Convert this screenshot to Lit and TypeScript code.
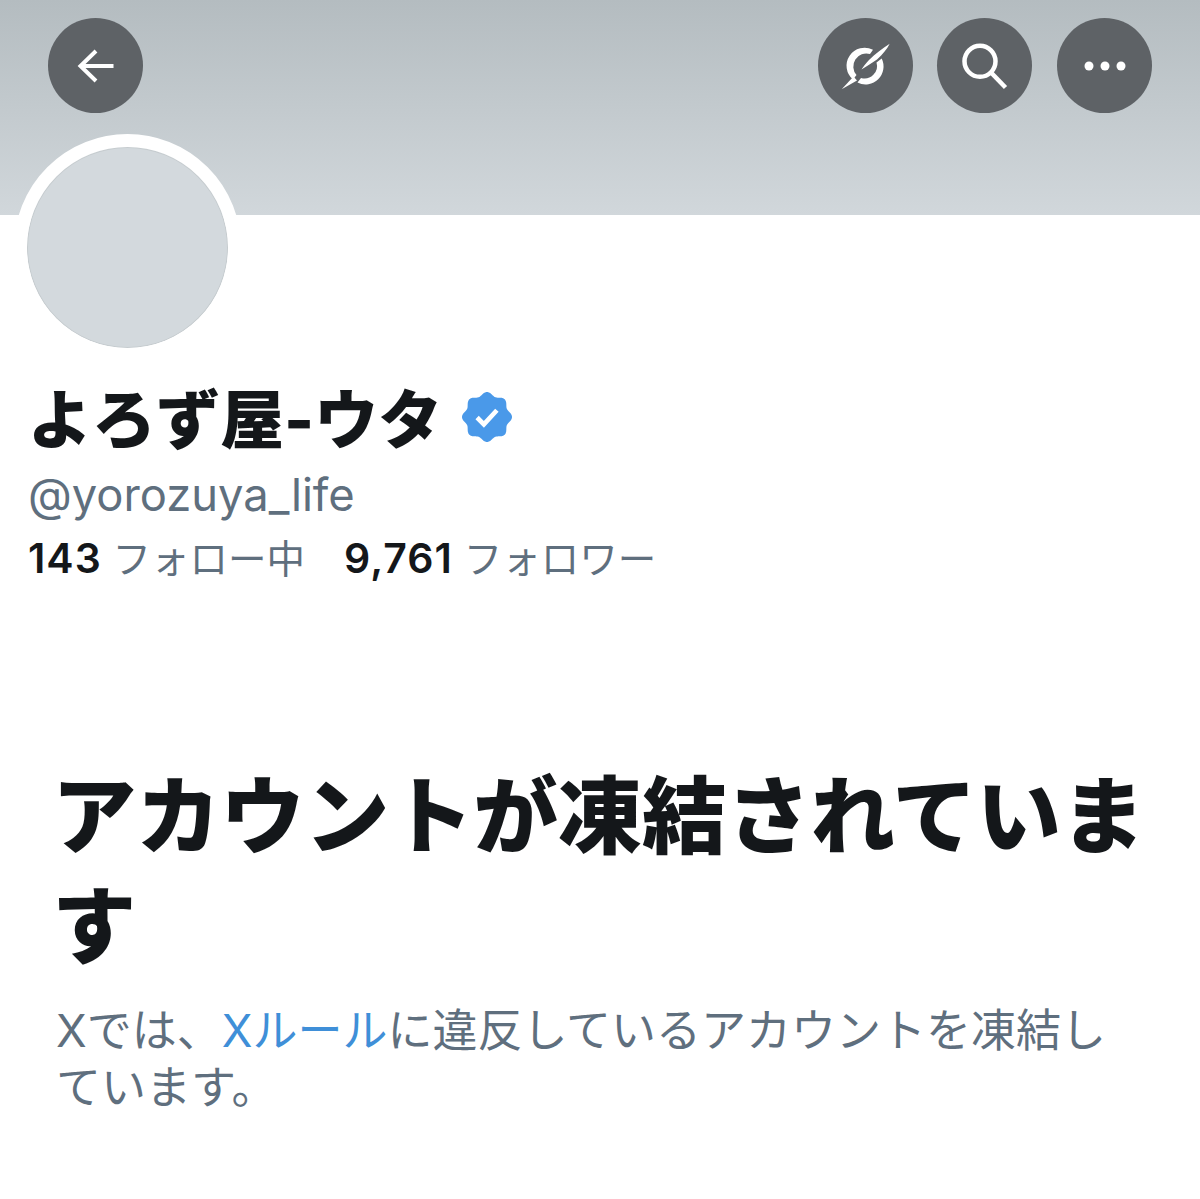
import { LitElement, html, css, svg } from 'lit';
import { customElement } from 'lit/decorators.js';

const backIcon = svg`<path d="M40.5 23H7M23 8L7.5 23L23 38" fill="none" stroke="#fff" stroke-width="4"/>`;
const linkIcon = svg`
    <path d="M31 6.8A18 18 0 0 0 11 36.5L14.5 32A13 13 0 0 1 28 11Z" fill="#fff"/>
    <path d="M15.5 39.5A18 18 0 0 0 39.7 15.5L34.5 19.5A12.5 12.5 0 0 1 19 35Z" fill="#fff"/>
    <path d="M47.7 .7C41 5 33 11 27 17C24 20 21 24 19.5 26.5C25 23 30 20 35 16.5C41 11 45 6 47.7 .7Z" fill="#fff"/>
    <path d="M-.3 46.3L11.5 33.5L15 37.5Z" fill="#fff"/>`;
const searchIcon = svg`<circle cx="18" cy="18.3" r="15.5" fill="none" stroke="#fff" stroke-width="4.5"/><path d="M29 29.5L43.5 44.5" fill="none" stroke="#fff" stroke-width="4.5"/>`;
const moreIcon = svg`<circle cx="7" cy="23" r="4.5" fill="#fff"/><circle cx="23" cy="23" r="4.5" fill="#fff"/><circle cx="39" cy="23" r="4.5" fill="#fff"/>`;

// scalloped badge outline, computed once
const badgePoints = Array.from({ length: 241 }, (_, i) => {
    const a = (i / 240) * Math.PI * 2;
    const r = 22.3 + 1.7 * Math.cos(8 * a);
    return `${(24 + r * Math.sin(a)).toFixed(2)},${(24 - r * Math.cos(a)).toFixed(2)}`;
}).join(' ');

@customElement('app-root')
export class AppRoot extends LitElement {
    static styles = css`
        :host {
            display: block;
            height: 1199px;
            overflow: hidden;
            background: #fff;
            font-family: "Inter", "Noto Sans CJK JP", sans-serif;
            color: #14171a;
        }

        .banner {
            height: 215px;
            box-sizing: border-box;
            padding: 18px 48px 0;
            display: flex;
            gap: 24.6px;
            background: linear-gradient(#b4bcc0, #d1d7db);
        }

        .spacer {
            flex: 1;
        }

        .round {
            width: 95px;
            height: 95px;
            border-radius: 50%;
            background: #5e6266;
            display: flex;
            align-items: center;
            justify-content: center;
        }

        .round svg {
            width: 46px;
            height: 46px;
            overflow: visible;
        }

        .avatar {
            width: 201px;
            height: 201px;
            margin: -81px 0 0 14px;
            border: 13px solid #fff;
            border-radius: 50%;
            position: relative;
            background: #d3d9dd;
            background-clip: padding-box;
            box-shadow: inset 0 0 0 1px #c6cccf;
        }

        .profile {
            padding: 24px 0 0 28px;
        }

        .name {
            display: flex;
            align-items: center;
            gap: 20px;
            font-size: 64px;
            line-height: 70px;
            font-weight: 800;
        }

        .name svg {
            width: 50px;
            height: 50px;
            margin-top: -6px;
        }

        .handle {
            font-size: 45.3px;
            line-height: 50px;
            margin-top: 15px;
            color: #5f6f7e;
            font-weight: 400;
        }

        .stats {
            display: flex;
            gap: 39px;
            margin-top: 13px;
            font-size: 38.5px;
            line-height: 50px;
            color: #5f6f7e;
        }

        .stats b {
            font-size: 41px;
            letter-spacing: 1px;
            color: #14171a;
            font-weight: 600;
        }

        .notice {
            padding: 177px 50px 0 52px;
        }

        h1 {
            margin: 0;
            font-size: 84.3px;
            line-height: 110px;
            font-weight: 800;
        }

        p {
            margin: 21px 20px 0 4px;
            font-size: 45px;
            line-height: 57px;
            color: #5f6f7e;
        }

        a {
            color: #3f8fd8;
            text-decoration: none;
        }
    `;

    render() {
        return html`
            <div class="banner">
                <div class="round"><svg viewBox="0 0 46 46">${backIcon}</svg></div>
                <div class="spacer"></div>
                <div class="round"><svg viewBox="0 0 46 46">${linkIcon}</svg></div>
                <div class="round"><svg viewBox="0 0 46 46">${searchIcon}</svg></div>
                <div class="round"><svg viewBox="0 0 46 46">${moreIcon}</svg></div>
            </div>
            <div class="avatar"></div>
            <div class="profile">
                <div class="name">
                    <span>よろず屋-ウタ</span>
                    <svg viewBox="0 0 48 48">
                        <polygon points="${badgePoints}" fill="#4a99e9"/>
                        <path d="M14.5 24.5L21 31L33.5 17.5" fill="none" stroke="#fff" stroke-width="4.5"/>
                    </svg>
                </div>
                <div class="handle">@yorozuya_life</div>
                <div class="stats">
                    <span><b>143</b> フォロー中</span>
                    <span><b>9,761</b> フォロワー</span>
                </div>
            </div>
            <div class="notice">
                <h1>アカウントが凍結されています</h1>
                <p>Xでは、<a>Xルール</a>に違反しているアカウントを凍結しています。</p>
            </div>
        `;
    }
}
